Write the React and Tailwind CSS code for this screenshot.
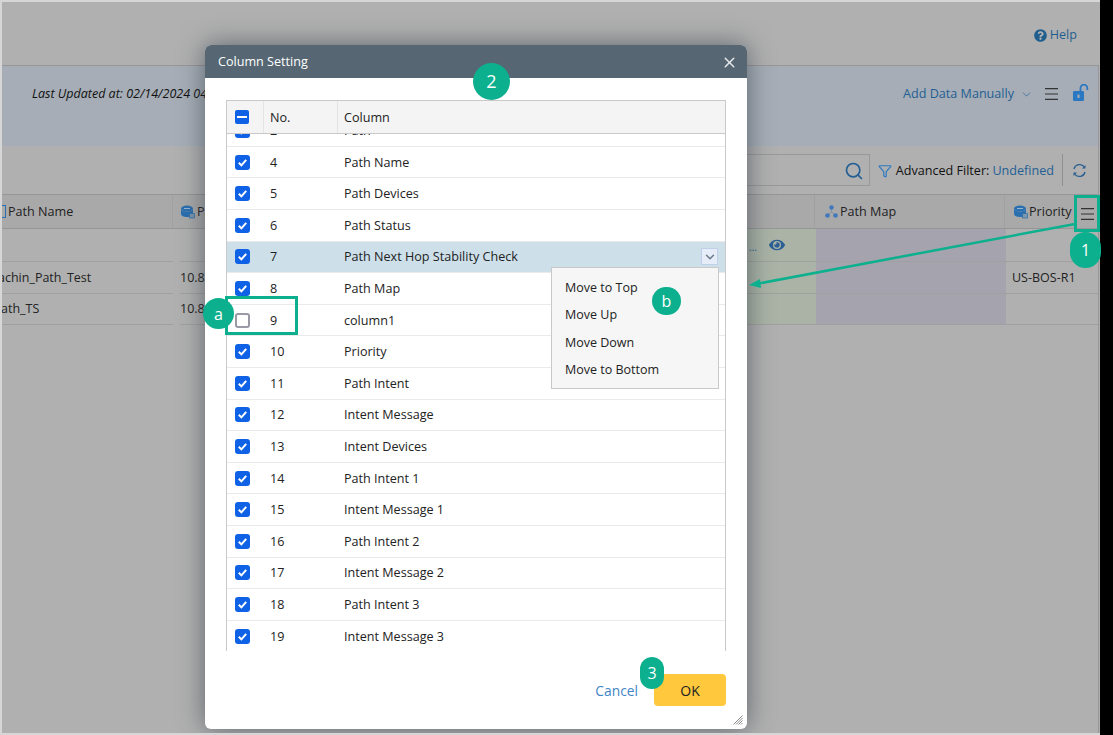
import React from "react";
import { FaQuestionCircle, FaEye } from "react-icons/fa";
import { Search, Filter, ChevronDown, X } from "lucide-react";

const font = { fontFamily: '"Open Sans", "Liberation Sans", sans-serif' };

const rows = [
  ["2", "Path"],
  ["4", "Path Name"],
  ["5", "Path Devices"],
  ["6", "Path Status"],
  ["7", "Path Next Hop Stability Check"],
  ["8", "Path Map"],
  ["9", "column1"],
  ["10", "Priority"],
  ["11", "Path Intent"],
  ["12", "Intent Message"],
  ["13", "Intent Devices"],
  ["14", "Path Intent 1"],
  ["15", "Intent Message 1"],
  ["16", "Path Intent 2"],
  ["17", "Intent Message 2"],
  ["18", "Path Intent 3"],
  ["19", "Intent Message 3"],
];

function Check({ on = true }) {
  if (!on)
    return <span className="block w-[15px] h-[15px] rounded-[3px] border-2 border-[#9a9aa6] bg-white" />;
  return (
    <span className="flex items-center justify-center w-[15px] h-[15px] rounded-[3px] bg-[#0f62e6]">
      <svg width="11" height="11" viewBox="0 0 11 11" fill="none">
        <path d="M1.800 5.800 L4.400 8.400 L9.200 2.800" stroke="white" strokeWidth="2" />
      </svg>
    </span>
  );
}

function Burger({ color = "#333" }) {
  return (
    <svg width="13" height="12" viewBox="0 0 13 12" fill="none">
      <path d="M0 .6h13M0 6h13M0 11.400h13" stroke={color} strokeWidth="1.100" />
    </svg>
  );
}

function RouterIcon() {
  return (
    <svg width="14" height="14" viewBox="0 0 14 14">
      <ellipse cx="6" cy="3.500" rx="6" ry="3" fill="#2a6fb0" />
      <path d="M0 3.500v5.500c0 1.700 2.700 3 6 3s6-1.300 6-3v-5.500c0 1.700-2.700 3-6 3s-6-1.300-6-3z" fill="#2a6fb0" />
      <path d="M3 3.500h6" stroke="#b5c8da" strokeWidth="0.800" />
      <rect x="8.500" y="8.500" width="5" height="4.500" fill="#7f95aa" stroke="#2a6fb0" strokeWidth="0.700" />
    </svg>
  );
}

function MapIcon() {
  return (
    <svg width="13" height="13" viewBox="0 0 13 13">
      <path d="M6.500 4v3M2.500 10 6.500 7l4 3" stroke="#7b8aa0" strokeWidth="0.800" fill="none" />
      <circle cx="6.500" cy="2.500" r="2.200" fill="#3f78bd" />
      <circle cx="2.500" cy="10.500" r="2.300" fill="#3f78bd" />
      <circle cx="10.500" cy="10.500" r="2.300" fill="#3f78bd" />
    </svg>
  );
}

function OpenLock() {
  return (
    <svg width="16" height="17" viewBox="0 0 16 17" className="ml-[15px] -mt-[4px]" fill="none">
      <rect x="0" y="7" width="11" height="10" rx="1.200" fill="#2a78c2" />
      <path d="M7.500 7.500V4a3.300 3.300 0 0 1 6.800 0v2" stroke="#2a78c2" strokeWidth="1.800" />
      <rect x="4.500" y="10.500" width="2" height="3.500" fill="#a6adb6" />
    </svg>
  );
}

function Refresh() {
  return (
    <svg width="15" height="15" viewBox="0 0 15 15" fill="none">
      <path d="M2 6A5.700 5.700 0 0 1 12 3.700M13 9A5.700 5.700 0 0 1 3 11.300" stroke="#2a5f8f" strokeWidth="1.300" />
      <path d="M13.500 2v3.500H10zM1.500 13V9.500H5z" fill="#2a5f8f" />
    </svg>
  );
}

function Badge({ className, children }) {
  return (
    <div className={"absolute flex items-center justify-center rounded-full bg-[#0cb08e] text-white " + className}>
      {children}
    </div>
  );
}

function Page() {
  return (
    <div className="w-[1100px] h-full overflow-hidden flex flex-col bg-[#b0b0b0] border-t-2 border-l-2 border-[#d6d6d6] text-[#222]">
      <div className="h-[63px] shrink-0 flex items-start justify-end pt-[24px] pr-[23px]">
        <div className="flex items-center gap-[3px] text-[12.600px] leading-[18px] text-[#1f5f8f]">
          <FaQuestionCircle size={13} className="text-[#1f5f8f]" />
          <span>Help</span>
        </div>
      </div>
      <div className="flex-1 flex flex-col border-t border-r border-[#979797] mr-[1px]">
        <div className="h-[80px] shrink-0 bg-[#a6adb6] flex items-start justify-between pl-[30px] pr-[9px] pt-[18px]">
          <i className="text-[12.500px] leading-[18px] text-[#111] mt-[1px]">Last Updated at: 02/14/2024 04:12:36</i>
          <div className="flex items-center text-[#235f94] text-[12.600px] leading-[18px] mt-[1px]">
            <span>Add Data Manually</span>
            <ChevronDown size={13} strokeWidth={1.700} className="ml-[6px] mr-[12px] text-[#3f749f]" />
            <Burger />
            <OpenLock />
          </div>
        </div>
        <div className="h-[48px] shrink-0 flex items-center justify-end pr-[11px]">
          <div className="w-[130px] h-[32px] border border-[#999] border-l-0 flex items-center justify-end pr-[5px]">
            <Search size={20} className="text-[#235f94] mt-[2px]" />
          </div>
          <Filter size={14} strokeWidth={2} className="ml-[8px] text-[#2a78c2] mt-[2px]" />
          <span className="ml-[4px] text-[12.600px] text-[#111] leading-[18px] mt-[1px]">Advanced Filter:</span>
          <span className="ml-[3px] text-[12.600px] text-[#235f94] leading-[18px] mt-[1px]">Undefined</span>
          <div className="w-px h-[32px] bg-[#8f8f8f] ml-[8px] mr-[9px]" />
          <Refresh />
        </div>
        <div className="h-[35px] shrink-0 bg-[#a9a9a9] border-t border-b border-[#969696] flex text-[12.600px] text-[#222] items-center">
          <div className="w-[171px] h-full flex items-center gap-[2px] border-r border-[#a0a0a0]">
            <span className="block w-[4px] h-[13px] border border-l-0 border-[#2a6fb0]" />
            <span className="mt-[2px]">Path Name</span>
          </div>
          <div className="w-[642px] h-full flex items-center gap-[2px] pl-[8px] border-r border-[#a0a0a0]">
            <RouterIcon />
            <span className="mt-[2px]">Path Device</span>
          </div>
          <div className="w-[190px] h-full flex items-center pl-[10px] gap-[2px] border-r border-[#a0a0a0]">
            <MapIcon />
            <span className="mt-[2px]">Path Map</span>
          </div>
          <div className="flex-1 h-full flex items-center pl-[9px] gap-[1px]">
            <RouterIcon />
            <span className="mt-[2px]">Priority</span>
          </div>
        </div>
        <div className="flex text-[12.500px] text-[#222]">
          <div className="w-[171px]">
            <div className="h-[33px] border-b border-[#a0a0a0]" />
            <div className="h-[32px] border-b border-[#a0a0a0] flex items-center -ml-[4px] pt-[1px]">achin_Path_Test</div>
            <div className="h-[31px] border-b border-[#a0a0a0] flex items-center -ml-[1px] pt-[1px]">ath_TS</div>
          </div>
          <div className="w-[567px] pl-[7px]">
            <div className="h-[33px] border-b border-[#a0a0a0]" />
            <div className="h-[32px] border-b border-[#a0a0a0] flex items-center pt-[1px]">10.8.1.1</div>
            <div className="h-[31px] border-b border-[#a0a0a0] flex items-center pt-[1px]">10.8.1.2</div>
          </div>
          <div className="w-[76px] bg-[#aab3a6]">
            <div className="h-[33px] border-b border-[#a0a0a0] flex items-center justify-end gap-[12px] pr-[31px] text-[#235f94]">
              <span className="text-[10px] leading-[18px] mt-[4px]">...</span>
              <FaEye size={16} className="text-[#2b5f96] -mt-[1px]" />
            </div>
            <div className="h-[32px] border-b border-[#a0a0a0]" />
            <div className="h-[31px] border-b border-[#a0a0a0]" />
          </div>
          <div className="w-[190px] bg-[#a5a3ae]">
            <div className="h-[33px] border-b border-[#a0a0a0]" />
            <div className="h-[32px] border-b border-[#a0a0a0]" />
            <div className="h-[31px] border-b border-[#a0a0a0]" />
          </div>
          <div className="flex-1">
            <div className="h-[33px] border-b border-[#a0a0a0]" />
            <div className="h-[32px] border-b border-[#a0a0a0] flex items-center pl-[6px] pt-[1px]">US-BOS-R1</div>
            <div className="h-[31px] border-b border-[#a0a0a0]" />
          </div>
        </div>
      </div>
    </div>
  );
}

function Modal() {
  return (
    <div className="absolute left-[205px] top-[45px] w-[542px] h-[684px] bg-white rounded-[6px] shadow-[0_0_26px_rgba(40,50,60,0.6)] flex flex-col text-[#222]">
      <div className="h-[33px] shrink-0 rounded-t-[6px] bg-[#566773] flex items-center justify-between pl-[13px] pr-[9px] text-white text-[12.600px]">
        <span className="mt-[1px]">Column Setting</span>
        <X size={17} strokeWidth={2} className="text-[#e8eaec] mt-[1px]" />
      </div>
      <div className="mx-[21px] mt-[22px] h-[551px] w-[500px] border-x border-[#c9c9c9] flex flex-col">
        <div className="h-[34px] shrink-0 flex items-center bg-[#f4f4f4] border-y border-[#c9c9c9] text-[12.600px] leading-[18px]">
          <div className="w-[37px] h-full flex items-center pl-[8px] border-r border-[#e4e4e4]">
            <span className="flex items-center justify-center w-[14px] h-[14px] rounded-[2px] bg-[#0f62e6]">
              <span className="block w-[10px] h-[2px] bg-white" />
            </span>
          </div>
          <div className="w-[74px] h-full flex items-center pl-[6px] pt-[1px] border-r border-[#e4e4e4]">No.</div>
          <div className="pl-[6px] pt-[1px]">Column</div>
        </div>
        <div className="flex-1 overflow-hidden">
          <div className="-mt-[18.800px]">
            {rows.map(([n, label]) => {
              const active = n === "7";
              return (
                <div
                  key={n}
                  className={
                    "h-[31.600px] flex items-center border-b border-[#eaeaea] text-[12.600px] " +
                    (active ? "bg-[#cde0ea]" : "bg-white")
                  }
                >
                  <div className="w-[37px] pl-[8px]"><Check on={n !== "9"} /></div>
                  <div className="w-[73px] pl-[6px] pt-[2px]">{n}</div>
                  <div className="flex-1 pl-[7px] pt-[2px]">{label}</div>
                  {active && (
                    <div className="w-[17px] h-[17px] mr-[7px] flex items-center justify-center bg-[#e6edf8] border border-[#bfd0e8]">
                      <ChevronDown size={14} strokeWidth={2.500} className="text-[#6a7a8a]" />
                    </div>
                  )}
                </div>
              );
            })}
          </div>
        </div>
      </div>
      <div className="flex-1 flex items-start justify-end pr-[21px] pt-[23px]">
        <span className="text-[13.800px] text-[#3f86c6] mr-[16px] leading-[33px]">Cancel</span>
        <div className="w-[72px] h-[32px] rounded-[4px] bg-[#ffc83d] flex items-center justify-center text-[14px] text-[#222]">OK</div>
      </div>
      <svg className="absolute right-[4px] bottom-[4px]" width="10" height="10" viewBox="0 0 10 10" fill="none">
        <path d="M0.500 9.500 9.500 0.500M3 9.500 9.500 3M5.500 9.500 9.500 5.500M8 9.500 9.500 8" stroke="#8a8a8a" strokeWidth="1" />
      </svg>
      <div className="absolute left-[346px] top-[222px] w-[168px] h-[122px] bg-[#f6f6f6] border border-[#c9c9c9] flex flex-col pt-[6px] pl-[13px] text-[12.500px] leading-[27.400px]">
        <span>Move to Top</span>
        <span>Move Up</span>
        <span>Move Down</span>
        <span>Move to Bottom</span>
      </div>
    </div>
  );
}

export default function App() {
  return (
    <div className="relative w-[1113px] h-[735px] overflow-hidden flex bg-black" style={font}>
      <Page />
      <Modal />
      <div className="absolute left-0 bottom-0 w-[1100px] h-[2px] bg-[#d6d6d6]" />
      <div className="absolute left-[1074px] top-[195px] w-[26px] h-[37px] border-[3px] border-[#0cb08e] flex items-center justify-center pl-[1px]">
        <Burger />
      </div>
      <div className="absolute left-[225px] top-[296px] w-[73px] h-[39px] border-[3px] border-[#0cb08e]" />
      <svg className="absolute left-0 top-0 pointer-events-none" width="1113" height="735" viewBox="0 0 1113 735" fill="none">
        <path d="M1075 224 L756 284" stroke="#0cb08e" strokeWidth="2.500" />
        <path d="M749 285 L760 279 L761 288 Z" fill="#0cb08e" />
      </svg>
      <Badge className="left-[1070px] top-[232px] w-[31px] h-[36px] text-[16px]">1</Badge>
      <Badge className="left-[473px] top-[63px] w-[37px] h-[37px] text-[18px]">2</Badge>
      <Badge className="left-[640px] top-[657px] w-[24px] h-[32px] text-[16px]">3</Badge>
      <Badge className="left-[203px] top-[298px] w-[31px] h-[31px] text-[16px]">a</Badge>
      <Badge className="left-[652px] top-[287px] w-[29px] h-[28px] text-[16px]">b</Badge>
    </div>
  );
}
